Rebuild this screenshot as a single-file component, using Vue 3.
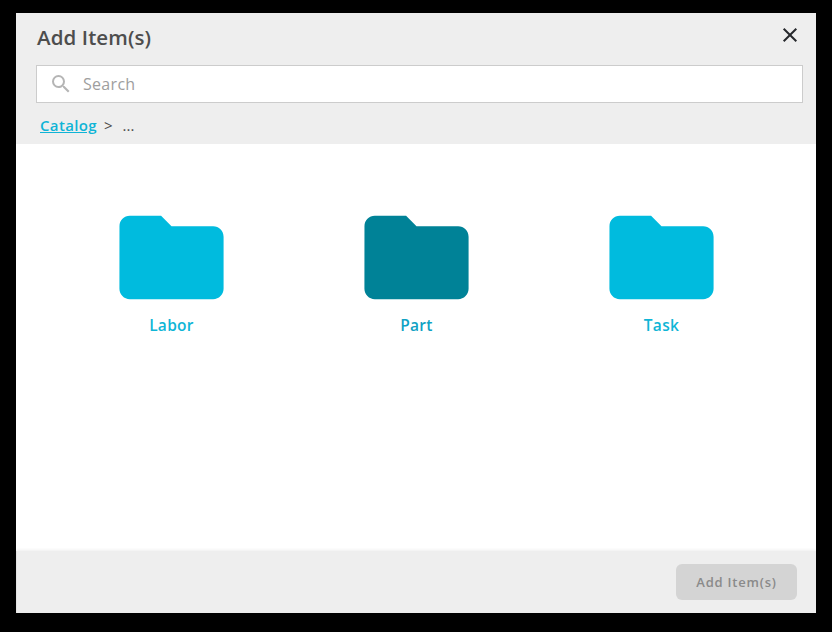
<script setup>
import { ref } from 'vue'

const search = ref('')
const folders = [
  { name: 'Labor', active: false },
  { name: 'Part', active: true },
  { name: 'Task', active: false },
]
</script>

<template>
  <div class="backdrop">
    <section class="dialog">
      <header class="header">
        <div class="title-row">
          <h1 class="title">Add Item(s)</h1>
          <button class="close" aria-label="Close">
            <svg width="24" height="24" viewBox="0 0 24 24">
              <path d="M5.7 5.7 18.3 18.3M18.3 5.7 5.7 18.3" />
            </svg>
          </button>
        </div>
        <label class="search">
          <svg class="search-icon" width="24" height="24" viewBox="0 0 24 24">
            <path d="M15.5 14h-.79l-.28-.27A6.471 6.471 0 0 0 16 9.5 6.5 6.5 0 1 0 9.5 16c1.61 0 3.09-.59 4.23-1.57l.27.28v.79l5 4.99L20.49 19l-4.99-5zm-6 0C7.01 14 5 11.99 5 9.5S7.01 5 9.5 5 14 7.01 14 9.5 11.99 14 9.5 14z" />
          </svg>
          <input v-model="search" class="search-input" type="text" placeholder="Search" />
        </label>
        <nav class="crumbs">
          <a class="crumb-link">Catalog</a>
          <span class="separator">&gt;</span>
          <span class="ellipsis">...</span>
        </nav>
      </header>
      <main class="folders">
        <div v-for="folder in folders" :key="folder.name" class="folder" :class="{ active: folder.active }">
          <svg class="folder-icon" width="125" height="125" viewBox="0 0 24 24">
            <path d="M10 4H4c-1.1 0-1.99.9-1.99 2L2 18c0 1.1.9 2 2 2h16c1.1 0 2-.9 2-2V8c0-1.1-.9-2-2-2h-8l-2-2z" />
          </svg>
          <span class="folder-name">{{ folder.name }}</span>
        </div>
      </main>
      <footer class="footer">
        <button class="add" disabled>Add Item(s)</button>
      </footer>
    </section>
  </div>
</template>

<style>
body {
  margin: 0;
  background: #000;
}
</style>

<style scoped>
.backdrop {
  box-sizing: border-box;
  height: 632px;
  padding: 13px 16px 19px;
  background: #000;
  font-family: "Open Sans", "Noto Sans", sans-serif;
}
.dialog {
  display: flex;
  flex-direction: column;
  height: 600px;
  background: #fff;
  overflow: hidden;
}
.header {
  box-sizing: border-box;
  flex: none;
  height: 131px;
  padding: 0 13px 0 20px;
  background: #eee;
}
.title-row {
  display: flex;
  justify-content: space-between;
  height: 52px;
}
.title {
  margin: 0;
  padding: 10px 0 0 1px;
  font-size: 20.5px;
  line-height: 28px;
  font-weight: 600;
  letter-spacing: 0.1px;
  color: #4d4d4d;
}
.close {
  width: 24px;
  height: 24px;
  margin: 10px 1px 0 0;
  padding: 0;
  border: 0;
  background: none;
}
.close svg {
  display: block;
  fill: none;
  stroke: #26282c;
  stroke-width: 2;
}
.search {
  box-sizing: border-box;
  display: flex;
  align-items: center;
  height: 38px;
  padding-left: 12px;
  border: 1px solid #ccc;
  background: #fff;
}
.search-icon {
  flex: none;
  fill: #b5b5b5;
}
.search-input {
  flex: 1;
  min-width: 0;
  padding: 0 0 0 10px;
  border: 0;
  outline: 0;
  background: none;
  font: 16px/24px "Open Sans", sans-serif;
  letter-spacing: 0.3px;
}
.search-input::placeholder {
  color: #9e9e9e;
  opacity: 1;
}
.crumbs {
  display: flex;
  padding: 10px 0 0 4px;
  font-size: 15px;
  line-height: 24px;
  color: #4a4a4a;
}
.crumb-link {
  font-weight: 600;
  letter-spacing: 0.35px;
  color: #0fb4d6;
  text-decoration: underline;
}
.separator {
  margin-left: 7px;
  font-weight: 500;
}
.ellipsis {
  margin-left: 10px;
  font-weight: 500;
}
.folders {
  flex: 1;
  display: grid;
  grid-template-columns: repeat(3, 245px);
  align-content: start;
  padding: 51px 33px 0;
}
.folder {
  display: flex;
  flex-direction: column;
  align-items: center;
}
.folder-icon {
  display: block;
  fill: #00bbde;
}
.active .folder-icon {
  fill: #008297;
}
.folder-name {
  margin-top: -7px;
  font-size: 15.5px;
  line-height: 24px;
  font-weight: 600;
  letter-spacing: 0.3px;
  color: #0fb5d6;
}
.active .folder-name {
  color: #10a2c4;
}
.footer {
  box-sizing: border-box;
  display: flex;
  justify-content: flex-end;
  align-items: flex-start;
  height: 62px;
  padding: 13px 19px 0 0;
  border-left: 1px solid #e3e3e3;
  background: #eee;
  box-shadow: 0 -1px 3px rgba(0, 0, 0, 0.07);
}
.add {
  width: 121px;
  height: 36px;
  padding: 0;
  border: 0;
  border-radius: 6px;
  background: #d4d4d4;
  color: #8a8a8a;
  font: 600 13px/20px "Open Sans", sans-serif;
  letter-spacing: 0.8px;
}
</style>
